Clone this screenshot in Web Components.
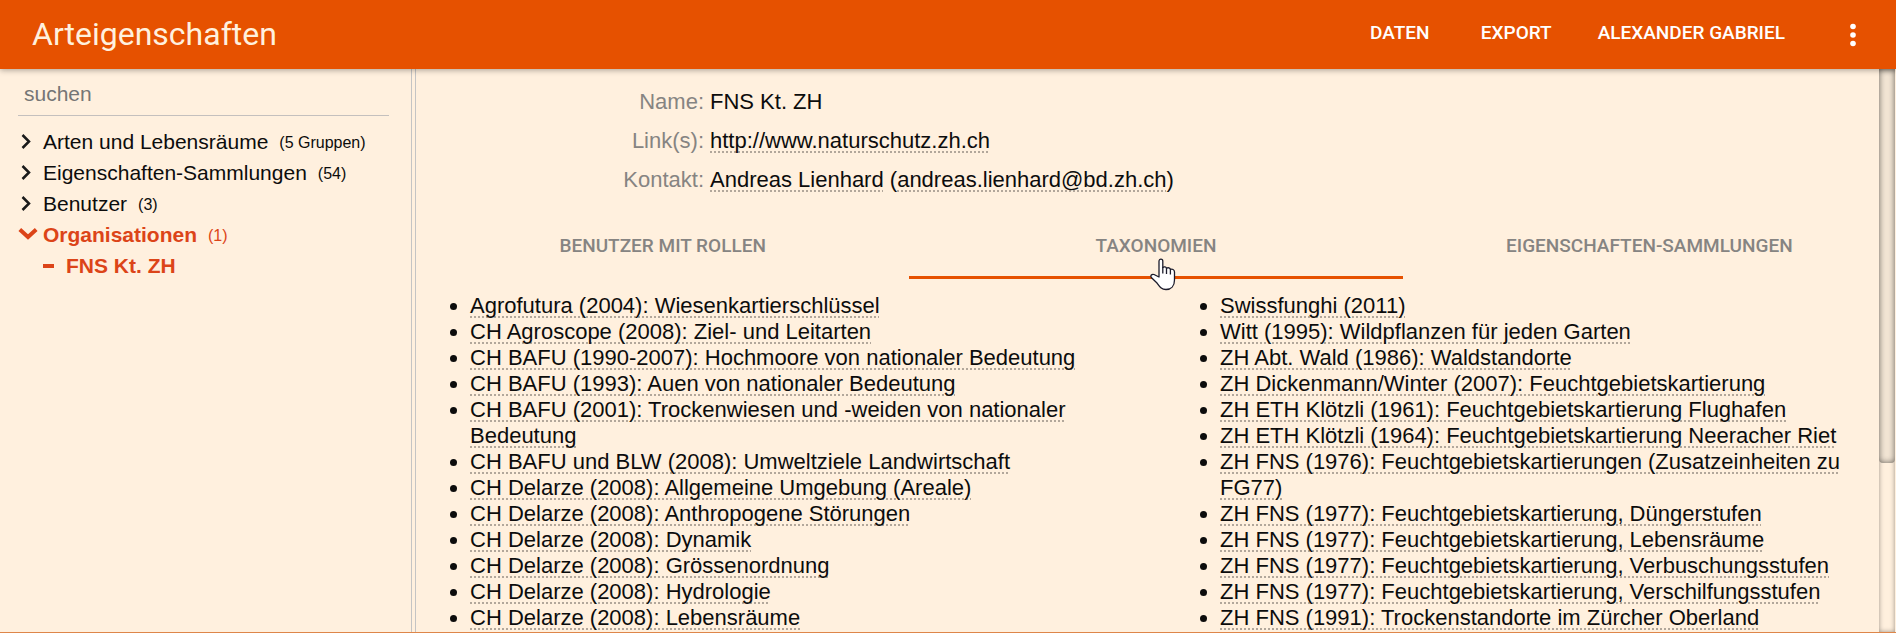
<!DOCTYPE html>
<html lang="de">
<head>
<meta charset="utf-8">
<title>Arteigenschaften</title>
<style>
  html, body { height: 100%; margin: 0; }
  body { font-family: "Liberation Sans", Arial, sans-serif; background: #fff0de; color: #0c0c0c; }
</style>
</head>
<body>
<ae-app></ae-app>
<script>
const define = (name, html, setup) => {
  const template = document.createElement('template');
  template.innerHTML = html;
  customElements.define(name, class extends HTMLElement {
    connectedCallback() {
      if (this.shadowRoot) return;
      const root = this.attachShadow({ mode: 'open' });
      root.append(template.content.cloneNode(true));
      if (setup) setup(this, root);
    }
  });
};

define('ae-header', `
<style>
  :host { display: block; position: relative; z-index: 2; background: #e65100; box-shadow: 0 1px 6px rgba(0,0,0,.35); font-family: Roboto, sans-serif; }
  header { display: flex; align-items: center; justify-content: space-between; height: 69px; padding: 0 33px 2px 32px; box-sizing: border-box; }
  h1 { margin: 0; font-size: 32px; line-height: 38px; font-weight: 400; color: #fff0de; }
  nav { display: flex; align-items: center; }
  button { all: unset; cursor: pointer; box-sizing: border-box; min-width: 116px; padding: 0 23px 2px; text-align: center; color: #fff; font: 500 19px/24px Roboto, sans-serif; }
  button.more { display: flex; min-width: 0; padding: 2px 0 0; margin-left: 35px; }
</style>
<header>
  <h1>Arteigenschaften</h1>
  <nav>
    <button type="button">DATEN</button>
    <button type="button">EXPORT</button>
    <button type="button">ALEXANDER GABRIEL</button>
    <button type="button" class="more" aria-label="Mehr">
      <svg width="20" height="24" viewBox="0 0 20 24" fill="#fff"><circle cx="10" cy="3.500" r="2.800"/><circle cx="10" cy="12" r="2.800"/><circle cx="10" cy="20.500" r="2.800"/></svg>
    </button>
  </nav>
</header>`);

define('ae-node', `
<style>
  :host { display: block; }
  a { display: flex; align-items: center; height: 31px; color: inherit; text-decoration: none; font-size: 21px; line-height: 31px; white-space: nowrap; }
  .icon { display: flex; width: 25px; padding-bottom: 2px; }
  .count { font-size: 16px; padding: 2px 0 0 11px; }
  :host([active]) a { color: #dc4418; }
  :host([active]) .label { font-weight: 700; }
  :host([level="2"]) a { padding-left: 23px; }
</style>
<a href="#"><span class="icon"></span><span class="label"><slot></slot></span><span class="count"></span></a>`,
(el, root) => {
  const icons = {
    closed: '<svg width="20" height="20" viewBox="0 0 20 20" fill="none" stroke="#1a1a1a" stroke-width="2.500"><path d="M4.500 4L11 10.500L4.500 17"/></svg>',
    open: '<svg width="20" height="20" viewBox="0 0 20 20" fill="none" stroke="#dc4418" stroke-width="4"><path d="M1.800 5.500L10 13L18.200 5.500"/></svg>',
    leaf: '<svg width="20" height="20" viewBox="0 0 20 20" fill="#dc4418"><path d="M2 9h11v4H2z"/></svg>'
  };
  root.querySelector('.icon').innerHTML = icons[el.getAttribute('icon')];
  const count = root.querySelector('.count');
  if (el.hasAttribute('count')) count.textContent = '(' + el.getAttribute('count') + ')';
  else count.remove();
});

define('ae-tree', `
<style>
  :host { display: block; box-sizing: border-box; padding: 8px 22px 0 18px; }
  input { display: block; width: 100%; box-sizing: border-box; height: 39px; margin: 0 0 10px; padding: 0 6px 4px; border: 0; border-bottom: 1px solid #c4c0be; outline: 0; background: none; color: #111; font: 21px/32px "Liberation Sans", Arial, sans-serif; }
  input::placeholder { color: #757575; opacity: 1; }
</style>
<input type="text" placeholder="suchen" aria-label="suchen">
<ae-node icon="closed" count="5 Gruppen">Arten und Lebensräume</ae-node>
<ae-node icon="closed" count="54">Eigenschaften-Sammlungen</ae-node>
<ae-node icon="closed" count="3">Benutzer</ae-node>
<ae-node icon="open" count="1" active>Organisationen</ae-node>
<ae-node icon="leaf" level="2" active>FNS Kt. ZH</ae-node>`);

define('ae-field', `
<style>
  :host { display: flex; gap: 6px; font-size: 22px; line-height: 26px; padding-bottom: 13px; }
  .label { flex: 0 0 288px; text-align: right; color: #868482; }
</style>
<span class="label"></span><span><slot></slot></span>`,
(el, root) => { root.querySelector('.label').textContent = el.getAttribute('label') + ':'; });

define('ae-link', `<style>
  :host { display: inline; }
  a { color: inherit; text-decoration: underline dotted 2px #b2a79b; text-underline-offset: 3px; text-decoration-skip-ink: none; }
</style><a href="#"><slot></slot></a>`,
(el, root) => { if (el.hasAttribute('href')) root.querySelector('a').href = el.getAttribute('href'); });

define('ae-pointer', `
<style>:host { display: block; pointer-events: none; } svg { display: block; }</style>
<svg width="26" height="33" viewBox="0 0 26 33"><path d="M9 19V3.200C9 .4 12.800 .4 12.800 3.200V9.500C14 8.300 16.300 8.700 16.500 10.300C18 9.300 20.200 9.800 20.400 11.500C22 10.800 24.500 11.300 24.500 14V22C24.500 28 21 31.500 16 31.500C11.500 31.500 9.500 28.500 7 25L1.300 19.500C.2 17.500 1.700 15.800 4 16.500Z" fill="#fff" stroke="#1b1b2b" stroke-width="1.300" stroke-linejoin="round"/><path d="M12.800 9V15.500M16.500 10.300V16M20.400 11.500V16.500" fill="none" stroke="#1b1b2b" stroke-width="1.300"/></svg>`);

define('ae-tabs', `
<style>
  :host { display: grid; grid-template-columns: repeat(3, 1fr); }
  button { all: unset; position: relative; cursor: pointer; box-sizing: border-box; height: 64px; text-align: center; border-bottom: 3px solid transparent; color: #868482; font: 500 19px/61px Roboto, sans-serif; }
  button[aria-selected="true"] { border-color: #e65100; }
  ae-pointer { position: absolute; left: 50%; top: 43px; margin-left: -6px; z-index: 1; }
</style>
<button type="button" role="tab">BENUTZER MIT ROLLEN</button>
<button type="button" role="tab" aria-selected="true">TAXONOMIEN<ae-pointer></ae-pointer></button>
<button type="button" role="tab">EIGENSCHAFTEN-SAMMLUNGEN</button>`);

const taxonomies = [
  'Agrofutura (2004): Wiesenkartierschlüssel',
  'CH Agroscope (2008): Ziel- und Leitarten',
  'CH BAFU (1990-2007): Hochmoore von nationaler Bedeutung',
  'CH BAFU (1993): Auen von nationaler Bedeutung',
  'CH BAFU (2001): Trockenwiesen und -weiden von nationaler Bedeutung',
  'CH BAFU und BLW (2008): Umweltziele Landwirtschaft',
  'CH Delarze (2008): Allgemeine Umgebung (Areale)',
  'CH Delarze (2008): Anthropogene Störungen',
  'CH Delarze (2008): Dynamik',
  'CH Delarze (2008): Grössenordnung',
  'CH Delarze (2008): Hydrologie',
  'CH Delarze (2008): Lebensräume',
  'Swissfunghi (2011)',
  'Witt (1995): Wildpflanzen für jeden Garten',
  'ZH Abt. Wald (1986): Waldstandorte',
  'ZH Dickenmann/Winter (2007): Feuchtgebietskartierung',
  'ZH ETH Klötzli (1961): Feuchtgebietskartierung Flughafen',
  'ZH ETH Klötzli (1964): Feuchtgebietskartierung Neeracher Riet',
  'ZH FNS (1976): Feuchtgebietskartierungen (Zusatzeinheiten zu FG77)',
  'ZH FNS (1977): Feuchtgebietskartierung, Düngerstufen',
  'ZH FNS (1977): Feuchtgebietskartierung, Lebensräume',
  'ZH FNS (1977): Feuchtgebietskartierung, Verbuschungsstufen',
  'ZH FNS (1977): Feuchtgebietskartierung, Verschilfungsstufen',
  'ZH FNS (1991): Trockenstandorte im Zürcher Oberland'
];

define('ae-taxonomies', `
<style>
  :host { display: block; padding-top: 14px; }
  ul { margin: 0; padding: 0; columns: 2; column-gap: 20px; font-size: 22px; line-height: 26px; }
  li { margin-left: 54px; padding-right: 16px; }
</style>
<ul></ul>`,
(el, root) => {
  root.querySelector('ul').append(...taxonomies.map(name => {
    const li = document.createElement('li');
    const link = document.createElement('ae-link');
    link.textContent = name;
    li.append(link);
    return li;
  }));
});

define('ae-scrollbar', `
<style>
  :host { display: block; width: 16px; background: #fff0de; box-shadow: inset 0 0 5px rgba(0,0,0,.4); }
  div { height: 70%; border-radius: 0 0 4px 4px; background: #f2e5d4; box-shadow: inset 0 0 6px rgba(0,0,0,.6); }
</style>
<div></div>`);

define('ae-organisation', `
<style>
  :host { display: block; position: relative; overflow: hidden; }
  .fields { padding: 20px 0 9px; }
  ae-scrollbar { position: absolute; top: 0; right: 1px; bottom: 0; z-index: 1; }
</style>
<div class="fields">
  <ae-field label="Name">FNS Kt. ZH</ae-field>
  <ae-field label="Link(s)"><ae-link href="http://www.naturschutz.zh.ch">http://www.naturschutz.zh.ch</ae-link></ae-field>
  <ae-field label="Kontakt"><ae-link>Andreas Lienhard</ae-link> (<ae-link href="mailto:andreas.lienhard@bd.zh.ch">andreas.lienhard@bd.zh.ch</ae-link>)</ae-field>
</div>
<ae-tabs></ae-tabs>
<ae-taxonomies></ae-taxonomies>
<ae-scrollbar></ae-scrollbar>`);

define('ae-app', `
<style>
  :host { display: flex; flex-direction: column; height: 100vh; box-sizing: border-box; border-bottom: 1px solid #de864a; }
  main { flex: 1; min-height: 0; display: flex; }
  ae-tree { flex: 0 0 411px; }
  .splitter { flex: 0 0 3px; border: 1px solid #c4c4c4; border-width: 0 1px; }
  ae-organisation { flex: 1; min-width: 0; }
</style>
<ae-header></ae-header>
<main>
  <ae-tree></ae-tree>
  <div class="splitter"></div>
  <ae-organisation></ae-organisation>
</main>`);
</script>
</body>
</html>
